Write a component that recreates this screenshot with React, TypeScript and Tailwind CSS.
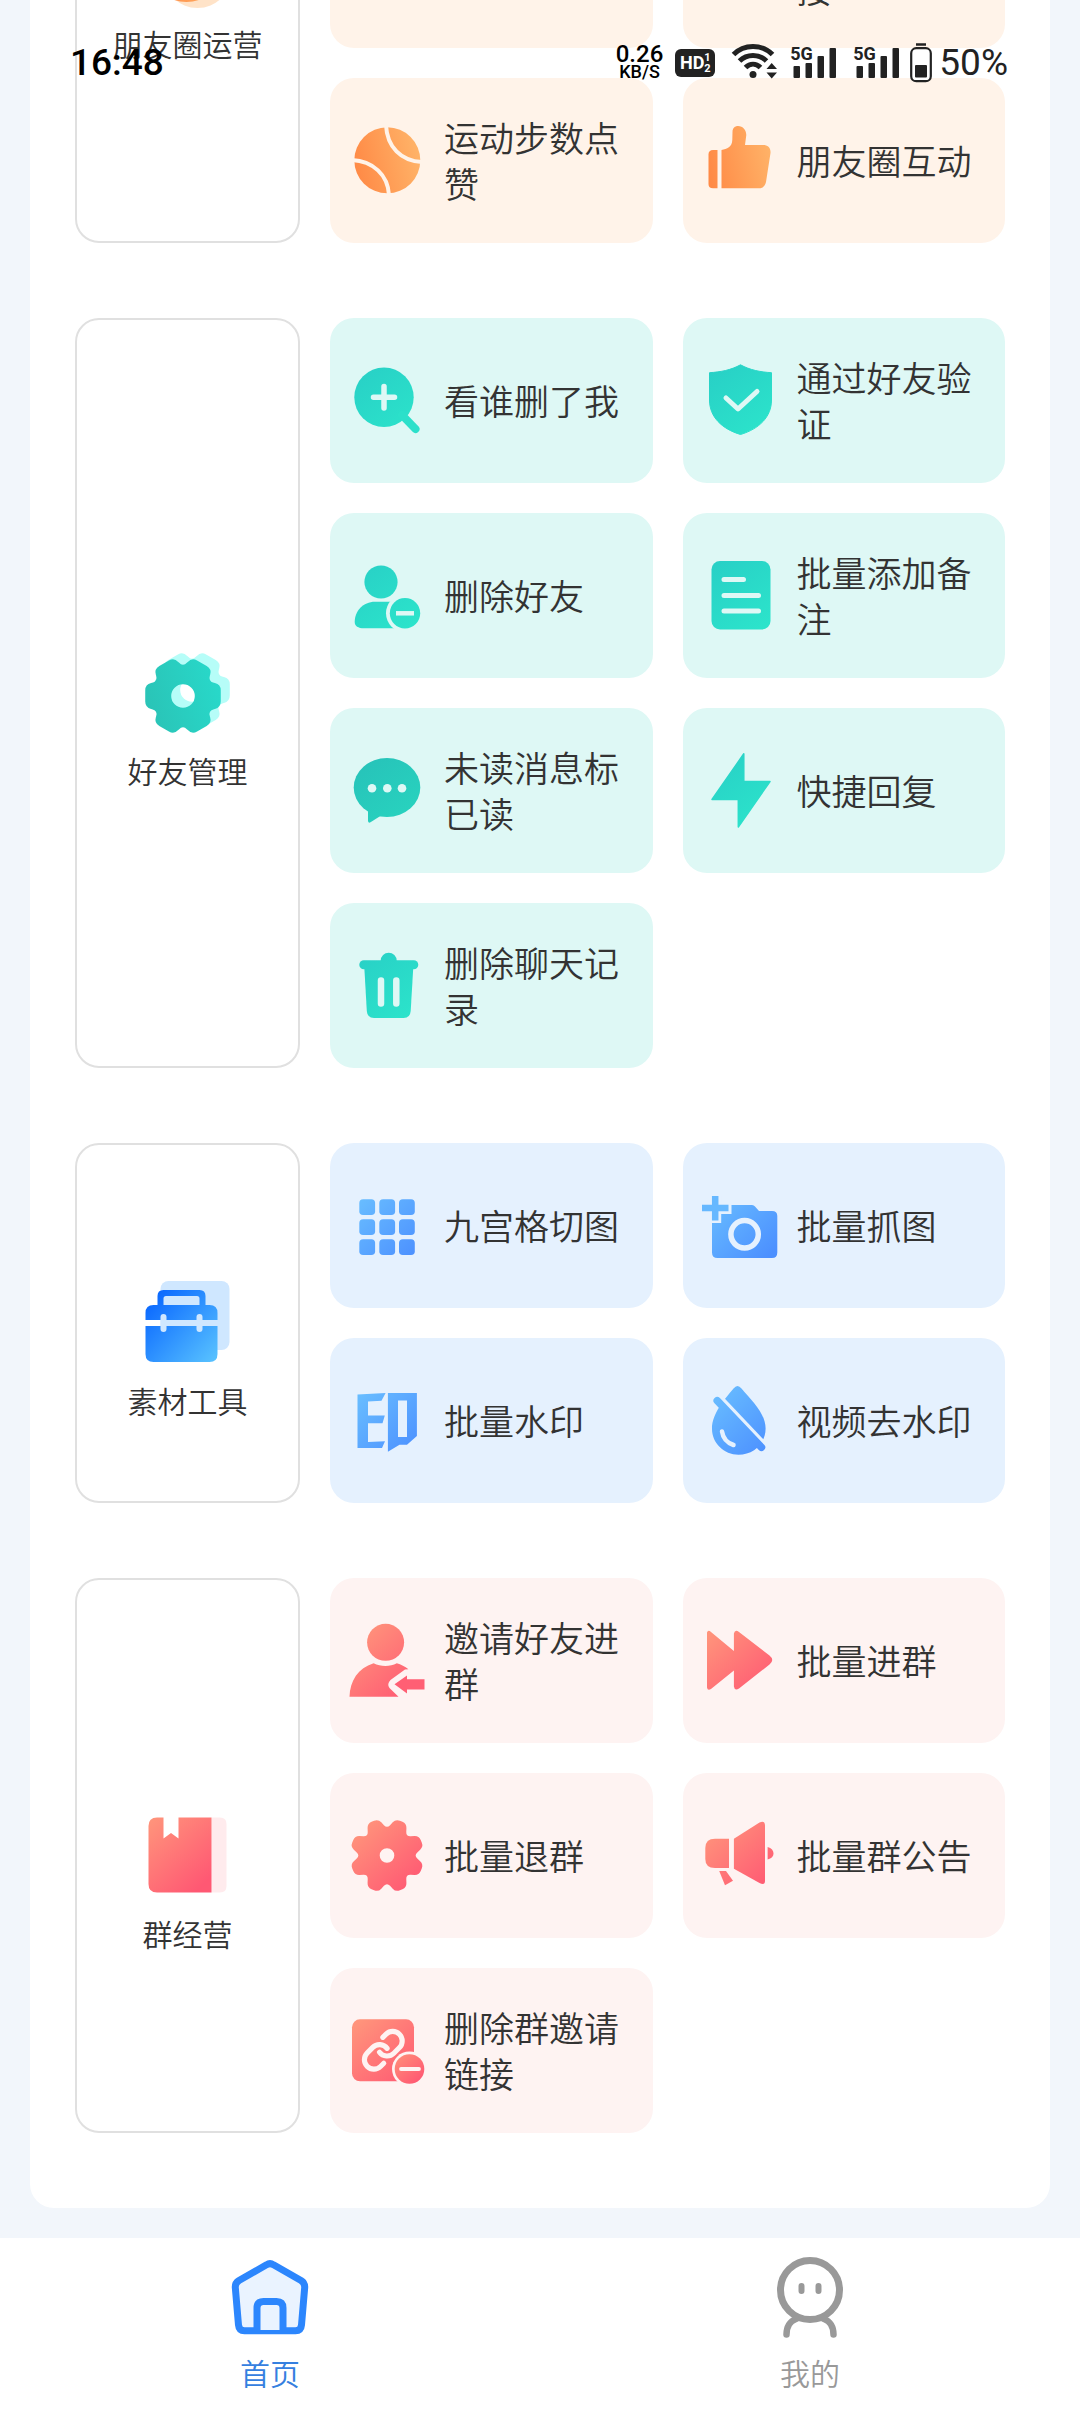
import { useState } from 'react';
import type { ReactNode } from 'react';

const TILE_BG = {
  orange: '#fff3e9',
  teal: '#def8f5',
  blue: '#e5f1fe',
  pink: '#fef3f2',
};

type Tone = keyof typeof TILE_BG;

const TONE_CLASS: Record<Tone, string> = {
  orange: 'bg-[#fff3e9]',
  teal: 'bg-[#def8f5]',
  blue: 'bg-[#e5f1fe]',
  pink: 'bg-[#fef3f2]',
};

/** Closed path for a cog with softly rounded teeth. */
function cogPath(cx: number, cy: number, teeth: number, start: number, outer: number, inner: number, half: number, cut: number) {
  const pts: [number, number][] = [];
  const at = (deg: number, r: number): [number, number] => [
    cx + r * Math.cos((deg * Math.PI) / 180),
    cy + r * Math.sin((deg * Math.PI) / 180),
  ];
  const step = 360 / teeth;
  for (let i = 0; i < teeth; i++) {
    const a = start + i * step;
    pts.push(at(a - half, outer), at(a + half, outer), at(a + step / 2, inner));
  }
  const toward = (p: [number, number], q: [number, number]) => {
    const d = Math.hypot(q[0] - p[0], q[1] - p[1]);
    const k = Math.min(cut, d / 2) / d;
    return `${(p[0] + (q[0] - p[0]) * k).toFixed(2)} ${(p[1] + (q[1] - p[1]) * k).toFixed(2)}`;
  };
  const n = pts.length;
  return (
    pts
      .map((p, i) => {
        const prev = pts[(i + n - 1) % n];
        const next = pts[(i + 1) % n];
        return `${i ? 'L' : 'M'}${toward(p, prev)}Q${p[0].toFixed(2)} ${p[1].toFixed(2)} ${toward(p, next)}`;
      })
      .join('') + 'Z'
  );
}

function hole(cx: number, cy: number, r: number) {
  return `M${cx - r} ${cy}a${r} ${r} 0 1 0 ${2 * r} 0a${r} ${r} 0 1 0 ${-2 * r} 0Z`;
}

function Gradients() {
  return (
    <svg className="absolute h-0 w-0" aria-hidden="true">
      <defs>
        <linearGradient id="g-orange" gradientUnits="userSpaceOnUse" x1="4" y1="40" x2="70" y2="25">
          <stop stopColor="#ff8a46" />
          <stop offset="1" stopColor="#ffb469" />
        </linearGradient>
        <linearGradient id="g-teal" gradientUnits="userSpaceOnUse" x1="10" y1="5" x2="60" y2="72">
          <stop stopColor="#28d0c6" />
          <stop offset="1" stopColor="#2ce4cb" />
        </linearGradient>
        <linearGradient id="g-teal-dark" gradientUnits="userSpaceOnUse" x1="10" y1="5" x2="60" y2="72">
          <stop stopColor="#27c2b9" />
          <stop offset="1" stopColor="#28d4bf" />
        </linearGradient>
        <linearGradient id="g-cog" gradientUnits="userSpaceOnUse" x1="5" y1="60" x2="76" y2="40">
          <stop stopColor="#2ac4b7" />
          <stop offset="1" stopColor="#28d8c9" />
        </linearGradient>
        <linearGradient id="g-blue" gradientUnits="userSpaceOnUse" x1="8" y1="10" x2="66" y2="68">
          <stop stopColor="#69beff" />
          <stop offset="1" stopColor="#4c90ff" />
        </linearGradient>
        <linearGradient id="g-pink" gradientUnits="userSpaceOnUse" x1="10" y1="8" x2="66" y2="68">
          <stop stopColor="#ff937b" />
          <stop offset="1" stopColor="#ff5873" />
        </linearGradient>
        <linearGradient id="g-minus" gradientUnits="userSpaceOnUse" x1="48" y1="44" x2="70" y2="68">
          <stop stopColor="#ff8a78" />
          <stop offset="1" stopColor="#ff5873" />
        </linearGradient>
        <linearGradient id="g-case" gradientUnits="userSpaceOnUse" x1="6" y1="22" x2="74" y2="84">
          <stop stopColor="#0a68ff" />
          <stop offset="1" stopColor="#5ac4ff" />
        </linearGradient>
      </defs>
    </svg>
  );
}

const ICONS: Record<string, ReactNode> = {
  ball: (
    <g>
      <circle cx="37.3" cy="37.3" r="33" fill="url(#g-orange)" />
      <path d="M36 2C37 24 51 38 72 39M2 37C23 38 38 52 39 72" fill="none" stroke={TILE_BG.orange} strokeWidth="4" />
    </g>
  ),
  thumb: (
    <g fill="url(#g-orange)">
      <path d="M14.5 27H10Q5.5 27 5.5 31.5V61Q5.5 65.3 10 65.3H14.5Z" />
      <path d="M18.5 27C24 26 29 24 29.3 17L29.5 9C29.5 5 32 3 35 3C40 3 43.3 7 43.3 12L42 22H60C65 22 68 25 67.5 30L63 59C62 63 60 65.3 56 65.3H18.5Z" />
    </g>
  ),
  search: (
    <g>
      <circle cx="34" cy="34.3" r="29.7" fill="url(#g-teal)" />
      <path d="M52 52L65.500 66" stroke="#2ce0ca" strokeWidth="8" strokeLinecap="round" />
      <path d="M34 23.500V45M23.500 34.300H44.500" stroke={TILE_BG.teal} strokeWidth="5.500" strokeLinecap="round" />
    </g>
  ),
  userMinus: (
    <g>
      <circle cx="31" cy="24" r="16.600" fill="url(#g-teal)" />
      <path d="M25 43.700H52V70.300H14C8 70.300 4.700 68 4.700 64C4.700 53 13 43.700 25 43.700Z" fill="url(#g-teal)" />
      <circle cx="55" cy="55.300" r="19" fill={TILE_BG.teal} />
      <circle cx="55" cy="55.300" r="15.200" fill="url(#g-teal)" />
      <path d="M46 55.300H64" stroke={TILE_BG.teal} strokeWidth="4.500" />
    </g>
  ),
  shield: (
    <g>
      <path
        d="M37.500 1.800C28 7 18 9 6.500 9.700V37C6.500 54 19 66 37.500 71.500C56 66 68.500 54 68.500 37V9.700C57 9 47 7 37.500 1.800Z"
        fill="url(#g-teal)"
        stroke="url(#g-teal)"
        strokeLinejoin="round"
      />
      <path d="M23 35L35 46L54 28.500" fill="none" stroke={TILE_BG.teal} strokeWidth="5" strokeLinecap="round" strokeLinejoin="round" />
    </g>
  ),
  note: (
    <g>
      <rect x="8.500" y="3" width="59" height="68.600" rx="8.500" fill="url(#g-teal)" />
      <path d="M21 21.600H40.500M21 37.400H55.500M21 53H55.500" stroke={TILE_BG.teal} strokeWidth="5" strokeLinecap="round" />
    </g>
  ),
  chat: (
    <g>
      <ellipse cx="37" cy="34.500" rx="33.300" ry="29.500" fill="url(#g-teal-dark)" />
      <path d="M18 54V68Q18.500 70.500 20.500 69.300L32 62Z" fill="url(#g-teal-dark)" />
      <g fill={TILE_BG.teal}>
        <circle cx="22" cy="35.300" r="4.300" />
        <circle cx="37.300" cy="35.300" r="4.300" />
        <circle cx="52" cy="35.300" r="4.300" />
      </g>
    </g>
  ),
  bolt: (
    <path
      d="M40.800 .8V28.500H67L35.300 74V46.500H9Z"
      fill="url(#g-teal)"
      stroke="url(#g-teal)"
      strokeWidth="1.500"
      strokeLinejoin="round"
    />
  ),
  trash: (
    <g>
      <g fill="url(#g-teal)">
        <circle cx="38.700" cy="12.700" r="8" />
        <rect x="9.300" y="12.300" width="59" height="9" rx="4.500" />
        <path d="M14.300 19H63.300L60.700 63Q60.200 70 53.500 70H24Q17.300 70 16.800 63Z" />
      </g>
      <path d="M31 32.500V55.500M46.300 32.500V55.500" stroke={TILE_BG.teal} strokeWidth="6.500" strokeLinecap="round" />
    </g>
  ),
  grid: (
    <g fill="url(#g-blue)">
      {[11.3, 31.3, 51.2].map((y) =>
        [9.3, 29.3, 49].map((x) => <rect key={`${x}-${y}`} x={x} y={y} width="15.800" height="15.800" rx="3.800" />),
      )}
    </g>
  ),
  camera: (
    <g>
      <path
        d="M9 22Q9 17 14 17H49Q51 17 52 18.500L56 23H69Q74.300 23 74.300 28V64.500Q74.300 70 69 70H14.500Q9 70 9 64.500Z"
        fill="url(#g-blue)"
      />
      <path d="M12.200 8V35M-1 20H28.500" stroke={TILE_BG.blue} strokeWidth="12" />
      <path d="M12.200 8V32.500M-1 20H25.500" stroke="#66b8ff" strokeWidth="6.500" />
      <circle cx="41.600" cy="46.300" r="13.700" fill="none" stroke={TILE_BG.blue} strokeWidth="5.500" />
    </g>
  ),
  stamp: (
    <g fill="url(#g-blue)">
      <path d="M7.500 11.500L35.600 10L31.500 17.700L18 18.500V32.500H34.800L32.500 40.300H18V59L35 58.300L32 65H7.500Z" />
      <path fillRule="evenodd" d="M37.900 10H66.900V53L57 61.700H49.500L37.900 68.700ZM48 17.500V54H57V17.500Z" />
    </g>
  ),
  dropOff: (
    <g>
      <path
        d="M30.500 5.500Q34.500 .5 38.500 5.500C48 17 62.600 30 62.600 45.500C62.600 61 50 71.700 35.500 71.700C21 71.700 9 60 9 46C9 30 22 16 30.500 5.500Z"
        fill="url(#g-blue)"
      />
      <path d="M16 12.500L64 63" stroke={TILE_BG.blue} strokeWidth="4" />
      <path d="M14.200 17.700L58.500 64.300" stroke="url(#g-blue)" strokeWidth="7.500" strokeLinecap="round" />
      <path d="M19 48.500C20 55 24.500 60 30.500 62" fill="none" stroke={TILE_BG.blue} strokeWidth="4.500" strokeLinecap="round" />
    </g>
  ),
  userIn: (
    <g>
      <g fill="url(#g-pink)">
        <circle cx="35.600" cy="19.300" r="18.500" />
        <path d="M-.5 73.700C0 58 8 45 23.600 40.300C31 44 40 44 46.800 40.300C51 41.500 55 43.500 58.400 46.300L55 46.500L40.500 57Q36.500 61.300 39.500 65L48.500 73.700Z" />
      </g>
      <path d="M44.500 61.300L57 52.500V56.300H74.500V66.500H57V70.500Z" fill="#ff5f74" />
    </g>
  ),
  forward: (
    <path
      d="M4 9.500Q5 6.500 8 9L30.900 28V10.500Q32 6 36 9L66.500 32.500Q72 37 66.500 41.500L36 65.500Q31.500 68 30.900 63.500V47.500L8 66Q4.500 68 4 64.500Z"
      fill="url(#g-pink)"
    />
  ),
  cog: (
    <path fillRule="evenodd" d={cogPath(37, 37.5, 8, 22.5, 37.5, 27, 9, 4.5) + hole(37, 37.5, 7.3)} fill="url(#g-pink)" />
  ),
  horn: (
    <g fill="url(#g-pink)">
      <path d="M26 20.700H12Q2.300 20.700 2.300 30V41Q2.300 50 12 50H26Z" />
      <path d="M30.900 20.700L56.500 4.500Q62 2 62 7.500V63Q62 67.500 56.500 65L30.900 50.700Z" />
      <path d="M64.600 29C72.500 31 72.500 40 64.600 41.500Z" />
      <path d="M16.200 53H23L30 62.700L22 67.300Z" />
    </g>
  ),
  linkOff: (
    <g>
      <rect x="2" y="6.300" width="62" height="62" rx="8" fill="url(#g-pink)" />
      <g transform="translate(10.500 14.500) scale(1.900)" fill="none" stroke={TILE_BG.pink} strokeWidth="2.700" strokeLinecap="round">
        <path d="M10 13a5 5 0 0 0 7.540.54l3-3a5 5 0 0 0-7.070-7.070l-1.720 1.710" />
        <path d="M14 11a5 5 0 0 0-7.540-.54l-3 3a5 5 0 0 0 7.070 7.070l1.710-1.710" />
      </g>
      <circle cx="59.500" cy="56" r="17.500" fill={TILE_BG.pink} />
      <circle cx="59.500" cy="56" r="14.800" fill="url(#g-minus)" />
      <path d="M51 56H69" stroke={TILE_BG.pink} strokeWidth="3.800" strokeLinecap="round" />
    </g>
  ),
};

const GROUP_ICONS: Record<string, ReactNode> = {
  moments: (
    <g>
      <circle cx="54.500" cy="53" r="34" fill="#ffe3c8" />
      <circle cx="43.500" cy="42" r="39" fill="url(#g-orange)" />
    </g>
  ),
  friends: (
    <g fillRule="evenodd">
      <path d={cogPath(49, 42, 6, 0, 39.5, 29, 17, 6) + hole(49, 42, 11.8)} fill="#b6fdf8" />
      <circle cx="40" cy="48" r="11.800" fill="#b6fdf8" />
      <circle cx="49" cy="42" r="11.800" fill="#fff" />
      <path d={cogPath(40, 48, 6, 0, 39.5, 29, 17, 6) + hole(40, 48, 11.8)} fill="url(#g-cog)" />
    </g>
  ),
  toolbox: (
    <g>
      <rect x="17.500" y="3" width="69" height="69" rx="8" fill="#cfe7ff" />
      <g fill="url(#g-case)">
        <path fillRule="evenodd" d="M14.500 27V18Q14.500 12 20.500 12H56.500Q62.500 12 62.500 18V27H66.500Q74.500 27 74.500 35V42H2.500V35Q2.500 27 10.500 27ZM20.500 27H56.500V20.500Q56.500 18 54 18H23Q20.500 18 20.500 20.500Z" />
        <path d="M2.500 48H74.500V76Q74.500 84 66.500 84H10.500Q2.500 84 2.500 76Z" />
      </g>
      <rect x="17.500" y="36" width="6" height="18" rx="3" fill="#cfe7ff" />
      <rect x="53.500" y="36" width="6" height="18" rx="3" fill="#cfe7ff" />
    </g>
  ),
  book: (
    <g>
      <path d="M68.500 6.500H77Q83.500 6.500 83.500 13V75Q83.500 81.500 77 81.500H68.500Z" fill="#ffebed" />
      <path
        d="M20.500 6.500H14Q5.500 6.500 5.500 15V73Q5.500 81.500 14 81.500H68.500V6.500H35.500V27.500L28 22L20.500 27.500Z"
        fill="url(#g-pink)"
      />
    </g>
  ),
};

interface Tile {
  icon?: string;
  label: string;
}

interface Group {
  name: string;
  icon: string;
  tone: Tone;
  tiles: Tile[];
}

const GROUPS: Group[] = [
  {
    name: '朋友圈运营',
    icon: 'moments',
    tone: 'orange',
    tiles: [
      { label: '' },
      { label: '' },
      { label: '' },
      { label: '\n接' },
      { icon: 'ball', label: '运动步数点赞' },
      { icon: 'thumb', label: '朋友圈互动' },
    ],
  },
  {
    name: '好友管理',
    icon: 'friends',
    tone: 'teal',
    tiles: [
      { icon: 'search', label: '看谁删了我' },
      { icon: 'shield', label: '通过好友验证' },
      { icon: 'userMinus', label: '删除好友' },
      { icon: 'note', label: '批量添加备注' },
      { icon: 'chat', label: '未读消息标已读' },
      { icon: 'bolt', label: '快捷回复' },
      { icon: 'trash', label: '删除聊天记录' },
    ],
  },
  {
    name: '素材工具',
    icon: 'toolbox',
    tone: 'blue',
    tiles: [
      { icon: 'grid', label: '九宫格切图' },
      { icon: 'camera', label: '批量抓图' },
      { icon: 'stamp', label: '批量水印' },
      { icon: 'dropOff', label: '视频去水印' },
    ],
  },
  {
    name: '群经营',
    icon: 'book',
    tone: 'pink',
    tiles: [
      { icon: 'userIn', label: '邀请好友进群' },
      { icon: 'forward', label: '批量进群' },
      { icon: 'cog', label: '批量退群' },
      { icon: 'horn', label: '批量群公告' },
      { icon: 'linkOff', label: '删除群邀请链接' },
    ],
  },
];

function TileButton({ tile, tone }: { tile: Tile; tone: Tone }) {
  return (
    <button
      type="button"
      className={`flex min-h-[165px] items-center gap-[19px] rounded-3xl px-5 text-left ${TONE_CLASS[tone]}`}
    >
      <svg viewBox="0 0 75 75" className="size-[75px] shrink-0 overflow-visible" aria-hidden="true">
        {tile.icon ? ICONS[tile.icon] : null}
      </svg>
      <span className="min-w-0 flex-1 pb-0.5 text-[35px] leading-[46px] whitespace-pre-line">{tile.label}</span>
    </button>
  );
}

function GroupSection({ group }: { group: Group }) {
  return (
    <section className="flex gap-[30px]" aria-label={group.name}>
      <div className="flex w-[225px] shrink-0 flex-col items-center justify-center gap-3 rounded-3xl border-2 border-[#e0e0e0] pt-[52px]">
        <svg viewBox="0 0 90 90" className="size-[90px] overflow-visible" aria-hidden="true">
          {GROUP_ICONS[group.icon]}
        </svg>
        <h2 className="text-[30px] leading-10">{group.name}</h2>
      </div>
      <div className="grid flex-1 grid-cols-2 gap-[30px]">
        {group.tiles.map((tile, i) => (
          <TileButton key={i} tile={tile} tone={group.tone} />
        ))}
      </div>
    </section>
  );
}

function Signal() {
  return (
    <div className="relative h-[30px] w-[47px]">
      <span className="absolute -top-1 left-0 text-lg leading-5 font-bold">5G</span>
      <svg viewBox="0 4 47 30" className="h-full w-full" fill="currentColor" aria-hidden="true">
        <rect x="3.500" y="22" width="6.500" height="12" rx="1" />
        <rect x="15.500" y="19" width="6.500" height="15" rx="1" />
        <rect x="27.500" y="12" width="6.500" height="22" rx="1" />
        <rect x="39.500" y="4" width="6.500" height="30" rx="1" />
      </svg>
    </div>
  );
}

function StatusBar() {
  return (
    <header className="absolute inset-x-0 top-0 z-10 flex h-[126px] items-center justify-between pr-[72px] pl-[70px] font-['Roboto',sans-serif] text-[#222]">
      <time className="text-[37px] leading-10 font-medium text-black">16:48</time>
      <div className="flex items-center">
        <div className="mr-3 text-center font-medium text-black">
          <div className="text-2xl leading-[18px]">0.26</div>
          <div className="text-lg leading-[18px]">KB/S</div>
        </div>
        <div className="mr-[17px] flex h-7 w-10 items-center justify-center rounded-md bg-[#222] text-white">
          <span className="text-lg leading-5 font-bold">HD</span>
          <span className="flex flex-col text-[11px] leading-[11px] font-bold">
            <span>1</span>
            <span>2</span>
          </span>
        </div>
        <svg viewBox="0 2 45 36" className="mr-[13px] h-9 w-[45px] overflow-visible" fill="none" stroke="currentColor" strokeWidth="5" aria-hidden="true">
          <path d="M1.500 11.500C12 .8 30 .8 40.500 11.500" />
          <path d="M7.500 18C15 10.500 27 10.500 34.500 18" />
          <path d="M13.500 24.500C18 20 24 20 28.500 24.500" />
          <circle cx="21" cy="31.500" r="3.500" fill="currentColor" stroke="none" />
          <path d="M34.500 26L39.700 20L45 26ZM34.500 29.500H45L39.700 35.500Z" fill="currentColor" stroke="none" />
        </svg>
        <div className="flex gap-4">
          <Signal />
          <Signal />
        </div>
        <svg viewBox="0 0 22 40" className="mr-[7px] ml-2.5 h-10 w-[22px]" fill="none" aria-hidden="true">
          <path d="M6 1.500H16" stroke="currentColor" strokeWidth="2.500" />
          <rect x="1.200" y="5.200" width="19.600" height="33" rx="5" stroke="currentColor" strokeWidth="2.200" fill="#fff" />
          <rect x="5" y="22" width="12" height="12.500" rx="1" fill="currentColor" />
        </svg>
        <span className="text-[37px] leading-10 font-normal">50%</span>
      </div>
    </header>
  );
}

function HomeIcon() {
  return (
    <svg viewBox="0 0 90 90" className="size-[90px] text-[#2c86fd]" stroke="currentColor" strokeWidth="7" strokeLinejoin="round" aria-hidden="true">
      <path
        d="M41.500 14.800Q45 12.500 48.500 14.800L76 30.500Q80 33 79.700 37.500L76.500 75Q76 80.800 70.500 80.800H19.500Q14 80.800 13.500 75L10.300 37.500Q10 33 14 30.500Z"
        fill="#eaf3ff"
      />
      <path d="M32 80V58Q32 51.500 38.500 51.500H51.500Q58 51.500 58 58V80" fill="#eaf3ff" />
    </svg>
  );
}

function MineIcon() {
  return (
    <svg viewBox="0 0 90 90" className="size-[90px] text-[#999]" fill="none" stroke="currentColor" strokeWidth="6.500" strokeLinecap="round" aria-hidden="true">
      <circle cx="45" cy="40" r="29.500" strokeWidth="7" />
      <path d="M36.500 36V41M53.500 36V41" strokeWidth="6" />
      <path d="M31 69C25 71 21.500 77 21.500 84.500M59 69C65 71 68.500 77 68.500 84.500" />
    </svg>
  );
}

const TABS = [
  { id: 'home', label: '首页', icon: <HomeIcon /> },
  { id: 'mine', label: '我的', icon: <MineIcon /> },
];

export default function App() {
  const [tab, setTab] = useState('home');

  return (
    <div className="relative flex h-screen flex-col overflow-hidden bg-[#f2f6fb] font-['Noto_Sans_CJK_SC',sans-serif] font-[350] text-[#333]">
      <Gradients />
      <StatusBar />
      <main className="flex min-h-0 flex-1 flex-col justify-end overflow-hidden">
        <div className="mx-[30px] mb-[30px] flex flex-col gap-[75px] rounded-b-3xl bg-white px-[45px] pb-[75px]">
          {GROUPS.map((group) => (
            <GroupSection key={group.name} group={group} />
          ))}
        </div>
      </main>
      <nav className="flex shrink-0 bg-white">
        {TABS.map((item) => (
          <button
            key={item.id}
            type="button"
            onClick={() => setTab(item.id)}
            aria-current={tab === item.id ? 'page' : undefined}
            className={`flex flex-1 flex-col items-center gap-3 pt-3 pb-5 ${
              tab === item.id ? 'text-[#3580e0]' : 'text-[#999]'
            }`}
          >
            {item.icon}
            <span className="text-[30px] leading-10">{item.label}</span>
          </button>
        ))}
      </nav>
    </div>
  );
}
